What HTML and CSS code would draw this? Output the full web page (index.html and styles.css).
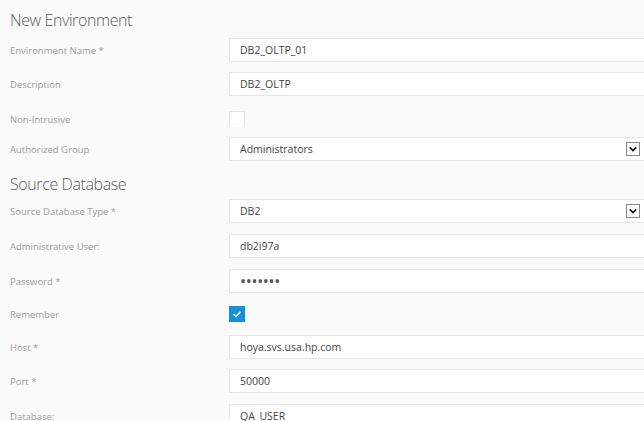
FILE: index.html
```html
<!DOCTYPE html>
<html lang="en">
<head>
<meta charset="utf-8">
<title>New Environment</title>
<link rel="stylesheet" href="styles.css">
</head>
<body>
<form class="env-form">
  <h2 class="section-title first">New Environment</h2>

  <div class="row">
    <label class="label">Environment Name *</label>
    <div class="field"><span class="value">DB2_OLTP_01</span></div>
  </div>
  <div class="row">
    <label class="label">Description</label>
    <div class="field"><span class="value">DB2_OLTP</span></div>
  </div>
  <div class="row check-row">
    <label class="label">Non-Intrusive</label>
    <span class="checkbox"></span>
  </div>
  <div class="row">
    <label class="label">Authorized Group</label>
    <div class="field select"><span class="value">Administrators</span>
      <span class="drop"><svg viewBox="0 0 14 14" width="12" height="12"><path d="M3.2 5 L7 8.8 L10.8 5" fill="none" stroke="#111" stroke-width="2"/></svg></span>
    </div>
  </div>

  <h2 class="section-title second">Source Database</h2>

  <div class="row spaced">
    <label class="label">Source Database Type *</label>
    <div class="field select"><span class="value">DB2</span>
      <span class="drop"><svg viewBox="0 0 14 14" width="12" height="12"><path d="M3.2 5 L7 8.8 L10.8 5" fill="none" stroke="#111" stroke-width="2"/></svg></span>
    </div>
  </div>
  <div class="row spaced">
    <label class="label">Administrative User:</label>
    <div class="field"><span class="value">db2i97a</span></div>
  </div>
  <div class="row">
    <label class="label">Password *</label>
    <div class="field"><span class="value dots">&#8226;&#8226;&#8226;&#8226;&#8226;&#8226;&#8226;</span></div>
  </div>
  <div class="row check-row checked-row">
    <label class="label">Remember</label>
    <span class="checkbox checked"><svg viewBox="0 0 16 16" width="16" height="16"><path d="M4.5 8.2 L7 10.5 L11.5 5.8" fill="none" stroke="#fff" stroke-width="1.6"/></svg></span>
  </div>
  <div class="row">
    <label class="label">Host *</label>
    <div class="field"><span class="value">hoya.svs.usa.hp.com</span></div>
  </div>
  <div class="row spaced">
    <label class="label">Port *</label>
    <div class="field"><span class="value">50000</span></div>
  </div>
  <div class="row">
    <label class="label">Database:</label>
    <div class="field"><span class="value">QA_USER</span></div>
  </div>
</form>
</body>
</html>
```

FILE: styles.css
```css
html, body {
  margin: 0;
  padding: 0;
  overflow: hidden;
  background: #fafafa;
}

body {
  font-family: "Open Sans", "Noto Sans", sans-serif;
}

/* column flow, so that row margins add up instead of collapsing */
.env-form {
  display: flex;
  flex-direction: column;
  width: 650px;
  padding-left: 10px;
  box-sizing: border-box;
}

.section-title {
  margin: 0;
  height: 24px;
  line-height: 24px;
  font-size: 16px;
  font-weight: 300;
  letter-spacing: -0.4px;
  color: #5a5a5a;
  flex: none;
}

.section-title.first {
  margin-top: 8px;
  margin-bottom: 6px;
}

.section-title.second {
  margin-top: 1px;
  margin-bottom: 3px;
}

.row {
  display: flex;
  align-items: center;
  height: 24px;
  margin-bottom: 10px;
  flex: none;
}

.row.spaced {
  margin-bottom: 11px;
}

.label {
  width: 219px;
  flex: none;
  font-size: 9.5px;
  color: #9a9a9a;
}

.field {
  flex: 1;
  height: 24px;
  box-sizing: border-box;
  border: 1px solid #e6e6e6;
  background: #fff;
  display: flex;
  align-items: center;
  padding-left: 10px;
  padding-right: 4px;
}

.value {
  flex: 1;
  font-size: 10.5px;
  color: #444;
}

.value.dots {
  font-size: 16px;
  line-height: 16px;
  letter-spacing: -0.3px;
  color: #555;
}

.drop {
  display: flex;
  width: 14px;
  height: 14px;
  box-sizing: border-box;
  border: 1px solid #8a8a8a;
  background: #fff;
  align-items: center;
  justify-content: center;
  margin-right: 5px;
}

.drop svg {
  display: block;
}

.check-row {
  height: 16px;
  margin-top: 5px;
}

.checked-row {
  margin-top: 3px;
  margin-bottom: 13px;
}

.checkbox {
  display: block;
  width: 16px;
  height: 16px;
  box-sizing: border-box;
  border: 1px solid #e2e2e2;
  border-bottom-color: transparent;
  background: #fff;
}

.checkbox.checked {
  background: #1490d8;
  border-color: #1490d8;
}

.checkbox svg {
  display: block;
  margin: -1px;
}
```
